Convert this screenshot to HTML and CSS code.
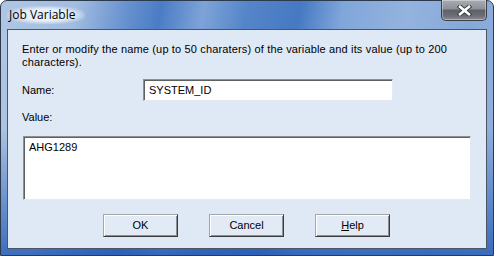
FILE: index.html
```html
<!DOCTYPE html>
<html>
<head>
<title>Job Variable</title>
<link rel="stylesheet" href="styles.css">
</head>
<body>
<div class="window">
  <div class="titlebar">
    <span class="title">Job Variable</span>
    <div class="close">
      <svg width="15" height="11" viewBox="0 0 15 11">
        <path d="M3 1.8 L12 9.2 M12 1.8 L3 9.2" stroke="#3a3a3a" stroke-width="4.4" stroke-linecap="square"/>
        <path d="M3 1.8 L12 9.2 M12 1.8 L3 9.2" stroke="#ffffff" stroke-width="2.6" stroke-linecap="square"/>
      </svg>
    </div>
  </div>
  <div class="client">
    <p class="intro">Enter or modify the name (up to 50 charaters) of the variable and its value (up to 200 characters).</p>
    <div class="field-row">
      <span class="label name-label">Name:</span>
      <div class="edit name-edit">SYSTEM_ID</div>
    </div>
    <div class="label value-label">Value:</div>
    <div class="edit value-edit">AHG1289</div>
    <div class="buttons">
      <div class="button">OK</div>
      <div class="button">Cancel</div>
      <div class="button"><u>H</u>elp</div>
    </div>
  </div>
</div>
</body>
</html>
```

FILE: styles.css
```css
/* Job Variable dialog */

body
{ margin: 0;
background: #ffffff;
}

div.window
{ box-sizing: border-box;
width: 494px;
height: 256px;
padding: 0 6px 6px 6px;
border: 1px solid #2d3a4e;
border-radius: 7px 7px 0 0;
background:
  linear-gradient(to bottom, rgba(255,255,255,0) 50%, rgba(35,90,180,0.8) 100%),
  linear-gradient(100deg, #b0c6e3 0%, #a3bde0 14%, #6690cf 24%, #4a7cc5 30%, #7ea3d8 38%, #5585c9 46%, #4679c3 56%, #80a6da 64%, #94b3de 76%, #86a8d9 88%, #95b3dd 100%);
font-family: "Liberation Sans", Arial, sans-serif;
}

div.titlebar
{ display: flex;
justify-content: space-between;
align-items: flex-start;
height: 28px;
}

span.title
{ margin: 5px 0 0 0;
padding: 0 10px 0 2px;
font-family: "Open Sans", "Noto Sans", sans-serif;
font-size: 12px;
line-height: 18px;
color: #000000;
border-radius: 10px;
background: radial-gradient(ellipse at center, rgba(235,242,250,0.95) 45%, rgba(220,232,246,0) 78%);
}

div.close
{ display: flex;
align-items: center;
justify-content: center;
box-sizing: border-box;
width: 46px;
height: 21px;
margin-top: -1px;
border: 1px solid #3c3f44;
border-top: none;
border-radius: 0 0 5px 5px;
background: linear-gradient(to bottom, #a9adb3 0%, #8d9197 45%, #5e6268 50%, #6c7076 80%, #8a8e94 100%);
box-shadow: inset 0 0 0 1px rgba(255,255,255,0.35);
}

div.client
{ box-sizing: border-box;
height: 220px;
padding: 13px 14px 0 14px;
border: 1px solid #4b5566;
background: #dfe8f5;
font-size: 11px;
color: #000000;
}

p.intro
{ margin: 0;
line-height: 13px;
letter-spacing: 0.15px;
}

div.field-row
{ display: flex;
align-items: center;
margin-top: 10px;
}

.label
{ line-height: 13px;
}

span.name-label
{ width: 121px;
}

div.edit
{ box-sizing: border-box;
background: #ffffff;
border: 1px solid;
border-color: #8e8f8f #e4eaf2 #e4eaf2 #8e8f8f;
box-shadow: inset 1px 1px 0 #5f6060;
}

div.name-edit
{ width: 250px;
height: 22px;
padding: 4px 0 0 5px;
line-height: 13px;
}

div.value-label
{ margin-top: 10px;
}

div.value-edit
{ width: 448px;
height: 64px;
margin: 12px 0 0 1px;
padding: 4px 0 0 5px;
line-height: 13px;
}

div.buttons
{ display: flex;
gap: 31px;
margin: 14px 0 0 81px;
}

div.button
{ box-sizing: border-box;
width: 75px;
height: 23px;
line-height: 20px;
text-align: center;
background: #e2eaf6;
border: 1px solid;
border-color: #a3a6aa #3b3b3b #3b3b3b #a3a6aa;
box-shadow: inset 1px 1px 0 #ffffff, inset -1px -1px 0 #8c8f93;
}
```
